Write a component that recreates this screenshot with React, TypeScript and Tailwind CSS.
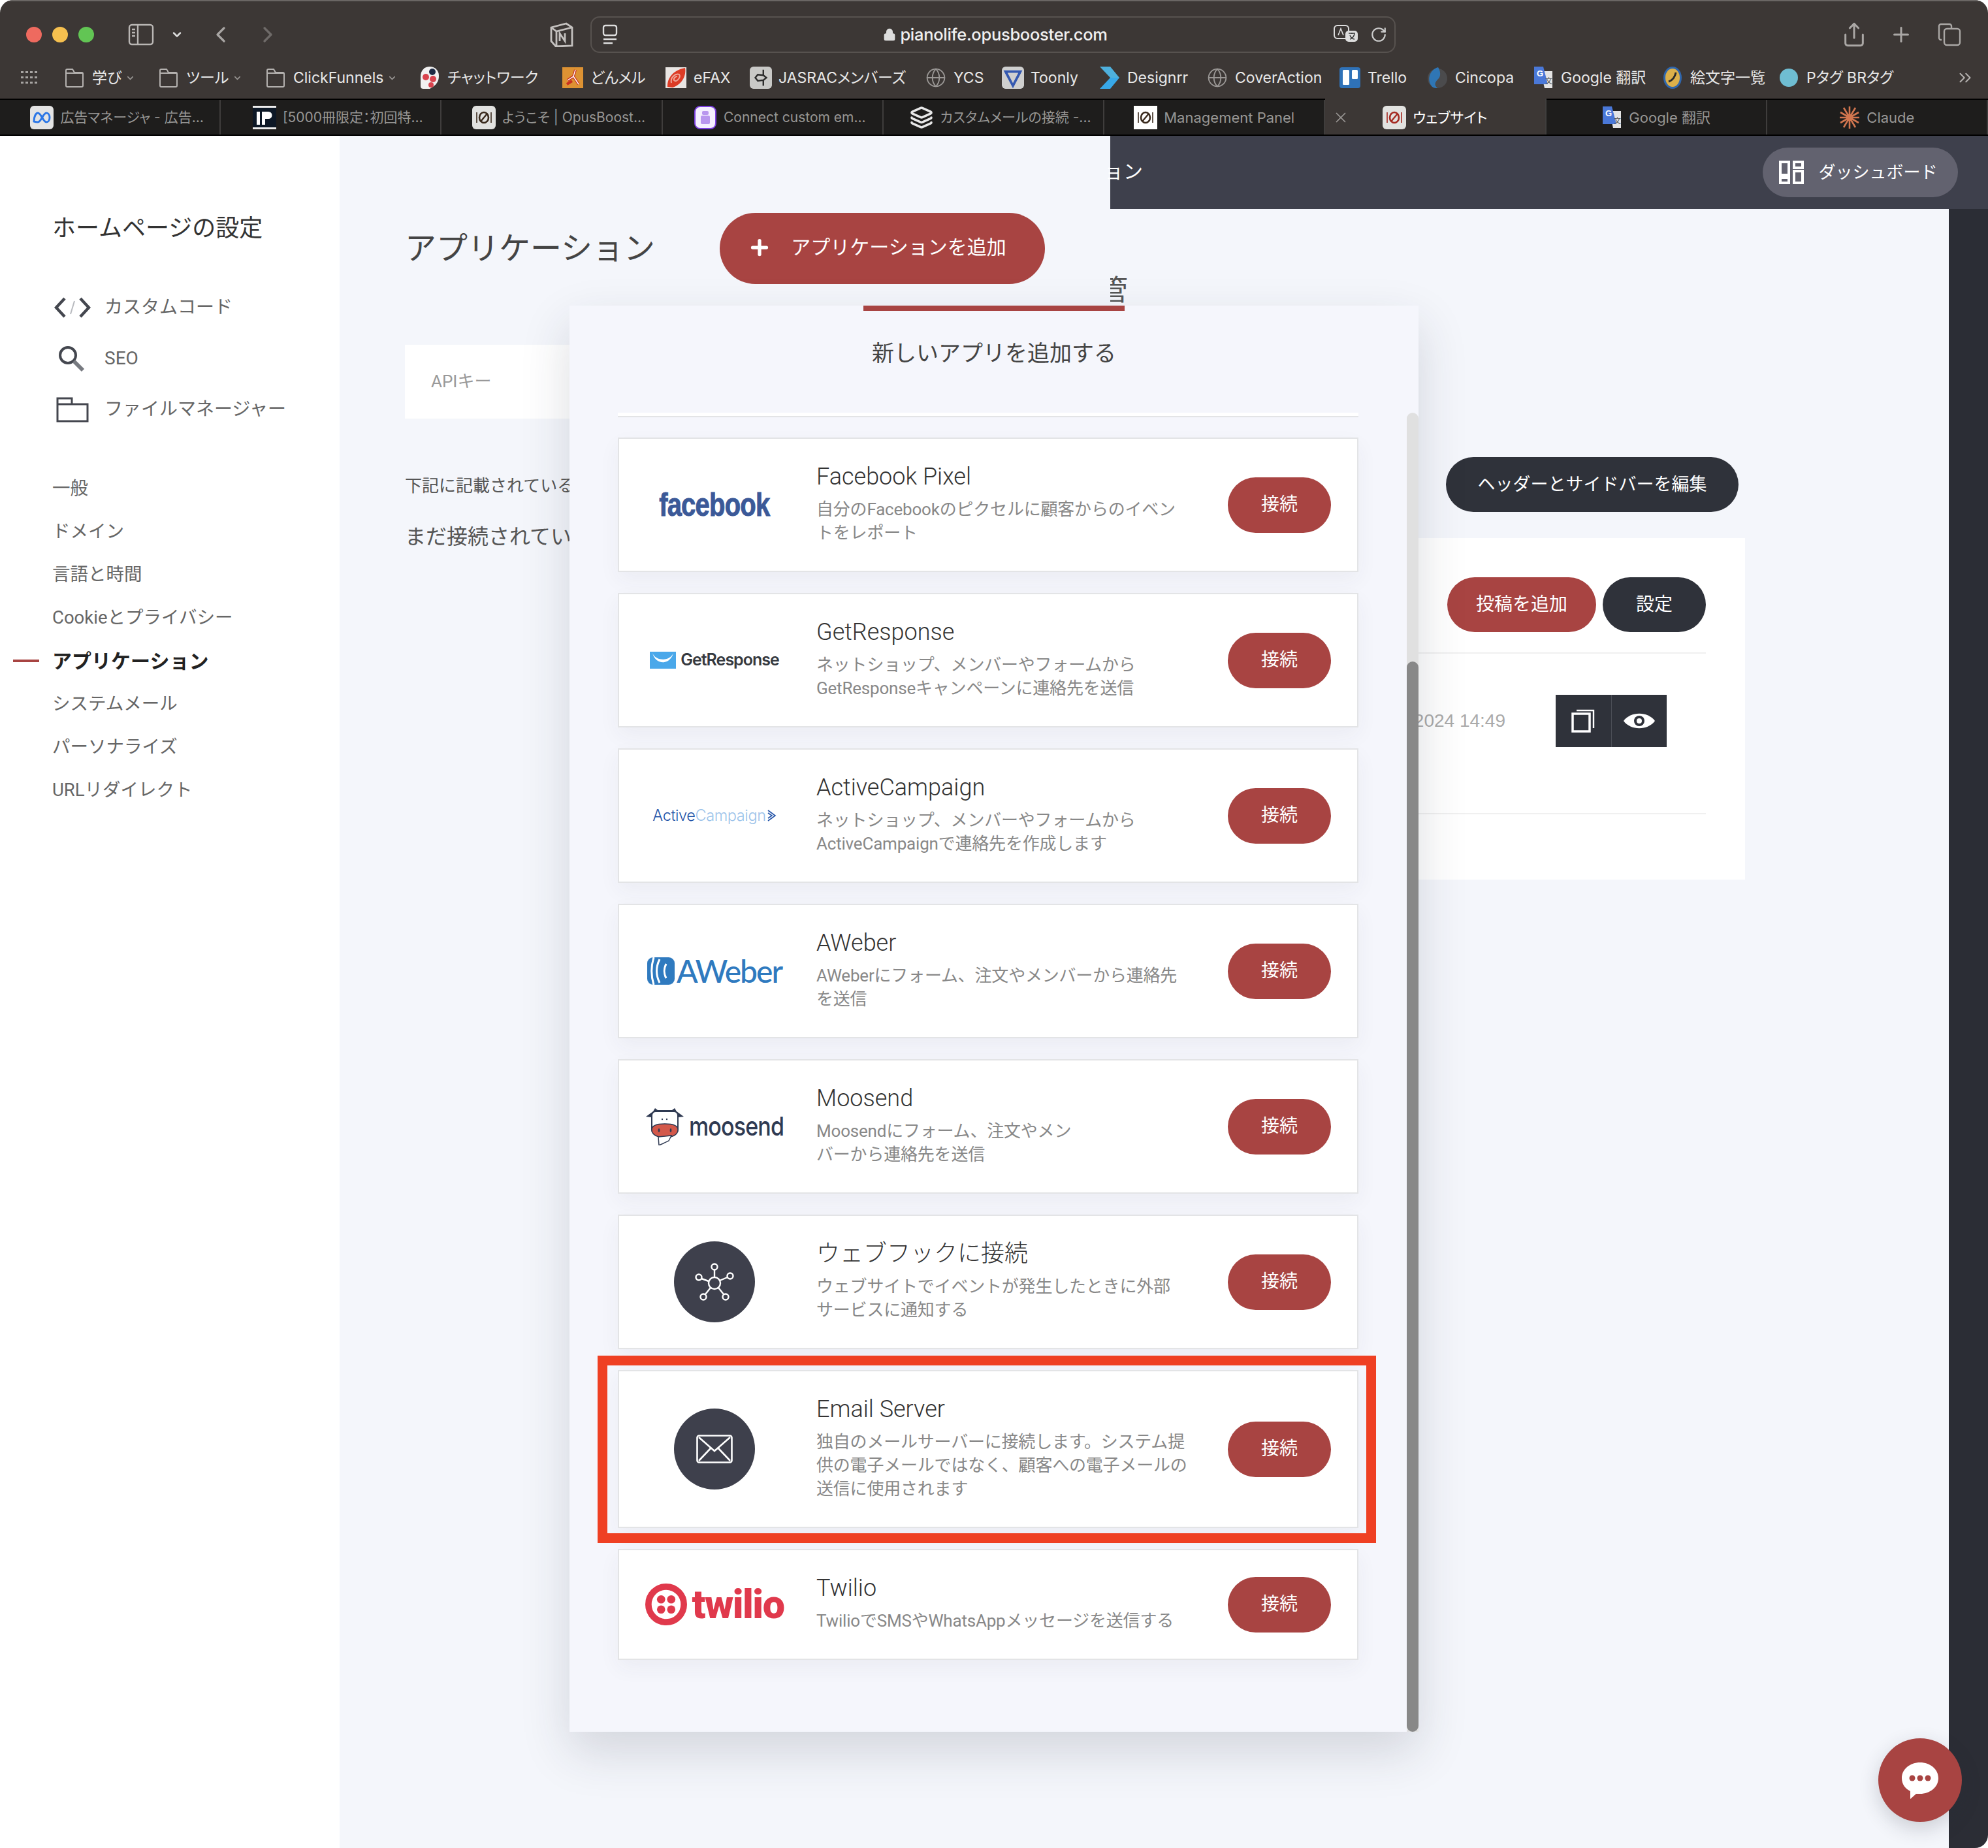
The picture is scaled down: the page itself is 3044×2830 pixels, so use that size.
import type { ReactNode } from 'react';
import { ChevronDown, ChevronLeft, ChevronRight, ChevronsRight, Globe, Layers, Lock, Plus, RotateCw, Share, X } from 'lucide-react';

const Folder = () => (
    <svg width="30" height="32" viewBox="0 0 30 32" fill="none" stroke="#b5b2b0" strokeWidth="2">
        <path d="M2 28V5a2 2 0 0 1 2-2h8l3 5h11a2 2 0 0 1 2 2v18a2 2 0 0 1-2 2H4a2 2 0 0 1-2-2zM2 9h26" />
    </svg>
);

const Chatwork = () => (
    <svg width="32" height="36" viewBox="0 0 32 36">
        <path d="M2 16C2 7 8 1 16 1s14 6 14 14-3 14-14 20H6c-2 0-4-1-4-4z" fill="#f1f1f1" />
        <circle cx="20" cy="9" r="5" fill="#1d2a44" />
        <circle cx="10" cy="17" r="5" fill="#d9434e" />
        <circle cx="21" cy="20" r="5" fill="#d9434e" />
        <circle cx="18" cy="29" r="4" fill="#d9434e" />
    </svg>
);

const Donmail = () => (
    <svg width="32" height="32" viewBox="0 0 32 32">
        <rect width="32" height="32" fill="#dd9233" />
        <path d="M20 4l-3 10-9 6m9-6l8 12M7 26l8-5" stroke="#c8301f" strokeWidth="4" fill="none" />
        <path d="M20 4l-3 10-9 6m9-6l8 12" stroke="#fff" strokeWidth="1.4" fill="none" />
    </svg>
);

const Efax = () => (
    <svg width="32" height="32" viewBox="0 0 32 32">
        <rect width="32" height="32" fill="#e9e5e3" />
        <path d="M30 1C12 4 2 17 3 30l8 1C26 26 32 12 30 1z" fill="#dd3c26" />
        <path d="M9 24c-2-8 6-15 12-13 3 5-5 13-8 9-1-4 3-6 5-6" stroke="#f0a79a" strokeWidth="2" fill="none" />
    </svg>
);

const Jasrac = () => (
    <svg width="36" height="36" viewBox="0 0 36 36">
        <rect width="36" height="36" rx="6" fill="#c9c9c7" />
        <path d="M22 5v9l5 4-5 4v9M22 14l-9-1-4 5 4 5 9-1" stroke="#2a2a2a" strokeWidth="2.5" fill="none" />
    </svg>
);

const Toonly = () => (
    <svg width="36" height="36" viewBox="0 0 36 36">
        <rect width="36" height="36" rx="6" fill="#cfcfcf" />
        <path d="M6 8h24L18 31z" fill="none" stroke="#3458b0" strokeWidth="4" />
    </svg>
);

const Designrr = () => (
    <svg width="32" height="36" viewBox="0 0 32 36">
        <path d="M1 1h16l14 17H17z" fill="#4eb0dd" />
        <path d="M31 18L17 35H1l16-17z" fill="#38a8e8" />
    </svg>
);

const Trello = () => (
    <svg width="32" height="32" viewBox="0 0 32 32">
        <rect width="32" height="32" rx="4" fill="#2f72b8" />
        <rect x="5" y="4" width="10" height="23" rx="1.5" fill="#fff" />
        <rect x="19" y="4" width="9" height="14" rx="1.5" fill="#fff" />
    </svg>
);

const Cincopa = () => (
    <svg width="32" height="34" viewBox="0 0 32 34">
        <circle cx="16" cy="18" r="15" fill="#4b4b4d" />
        <path d="M17 1C5 4-2 20 8 31c3 2 6 2 8 2-7-6-2-11 2-15 3-4 3-11-1-17z" fill="#2f76b5" />
    </svg>
);

const GTranslate = () => (
    <svg width="32" height="36" viewBox="0 0 32 36">
        <path d="M12 8h18v26H18z" fill="#e4e4e4" />
        <path d="M2 1h14l7 27H2z" fill="#4a78d8" />
        <text x="6" y="16" fontSize="13" fontWeight="700" fill="#fff" fontFamily="Liberation Sans">G</text>
        <text x="19" y="27" fontSize="11" fill="#555" fontFamily="Noto Sans CJK JP">文</text>
    </svg>
);

const Emoji = () => (
    <svg width="30" height="36" viewBox="0 0 30 36">
        <ellipse cx="15" cy="18" rx="14" ry="17" fill="#2f66ad" />
        <ellipse cx="15" cy="18" rx="11" ry="14" fill="#dcb04a" />
        <path d="M9 24c6-2 10-8 11-14" stroke="#2a2a2a" strokeWidth="3" fill="none" />
    </svg>
);

const Ptag = () => (
    <svg width="32" height="32" viewBox="0 0 32 32">
        <circle cx="16" cy="16" r="14" fill="#6fbdd2" />
    </svg>
);

const Meta = () => (
    <svg width="36" height="36" viewBox="0 0 36 36">
        <rect width="36" height="36" rx="6" fill="#e4e4e4" />
        <path d="M6 24c0-8 3-13 6-13 5 0 8 14 13 14 3 0 5-3 5-7 0-4-2-7-5-7-5 0-8 14-13 14-3 0-6-1-6-1z" fill="none" stroke="#2b76e6" strokeWidth="3" />
    </svg>
);

const Book = () => (
    <svg width="36" height="36" viewBox="0 0 36 36">
        <rect width="36" height="36" rx="3" fill="#0d1826" />
        <rect y="0" width="36" height="3" fill="#eee" />
        <rect y="33" width="36" height="3" fill="#eee" />
        <rect x="6" y="9" width="5" height="20" fill="#fff" />
        <path d="M14 9h10a5 5 0 0 1 0 11h-5v9h-5z" fill="#fff" />
    </svg>
);

const Opus = ({ bg = '#e2e2e0', mark = '#3a2a1d', rounded = true }: { bg?: string; mark?: string; rounded?: boolean }) => (
    <svg width="36" height="36" viewBox="0 0 36 36">
        <rect width="36" height="36" rx={rounded ? 6 : 0} fill={bg} />
        <path d="M7 10v16M29 10v16" stroke={mark} strokeWidth="1.6" />
        <ellipse cx="18" cy="18" rx="7" ry="8" fill="none" stroke={mark} strokeWidth="2.6" />
        <path d="M13 24L23 12" stroke={mark} strokeWidth="2.4" />
    </svg>
);

const Connect = () => (
    <svg width="36" height="36" viewBox="0 0 36 36">
        <rect x="2" y="1" width="32" height="34" rx="8" fill="#f5efff" stroke="#7c3fe0" strokeWidth="2" />
        <rect x="11" y="15" width="14" height="13" rx="2" fill="#b996ee" />
        <rect x="13" y="8" width="10" height="6" rx="2" fill="#b996ee" />
    </svg>
);

const Claude = () => (
    <svg width="32" height="36" viewBox="0 0 32 36" stroke="#d2764f" strokeWidth="2.6">
        <path d="M16 1v34M2 10l28 16M30 10L2 26M7 3l18 30M25 3L7 33M1 18h30" />
    </svg>
);

const marks: { icon: ReactNode; label: string; w: string; arrow?: boolean }[] = [
    { icon: <Folder />, label: '学び', w: 'w-[144px]', arrow: true },
    { icon: <Folder />, label: 'ツール', w: 'w-[164px]', arrow: true },
    { icon: <Folder />, label: 'ClickFunnels', w: 'w-[236px]', arrow: true },
    { icon: <Chatwork />, label: 'チャットワーク', w: 'w-[219px]' },
    { icon: <Donmail />, label: 'どんメル', w: 'w-[158px]' },
    { icon: <Efax />, label: 'eFAX', w: 'w-[130px]' },
    { icon: <Jasrac />, label: 'JASRACメンバーズ', w: 'w-[268px]' },
    { icon: <Globe size={32} color="#9a9795" strokeWidth={1.4} />, label: 'YCS', w: 'w-[118px]' },
    { icon: <Toonly />, label: 'Toonly', w: 'w-[148px]' },
    { icon: <Designrr />, label: 'Designrr', w: 'w-[165px]' },
    { icon: <Globe size={32} color="#9a9795" strokeWidth={1.4} />, label: 'CoverAction', w: 'w-[203px]' },
    { icon: <Trello />, label: 'Trello', w: 'w-[134px]' },
    { icon: <Cincopa />, label: 'Cincopa', w: 'w-[162px]' },
    { icon: <GTranslate />, label: 'Google 翻訳', w: 'w-[198px]' },
    { icon: <Emoji />, label: '絵文字一覧', w: 'w-[178px]' },
    { icon: <Ptag />, label: 'Pタグ BRタグ', w: 'w-[272px]' },
];

const tabs: { icon: ReactNode; label: string; active?: boolean; shifted?: boolean }[] = [
    { icon: <Meta />, label: '広告マネージャ - 広告…', shifted: true },
    { icon: <Book />, label: '[5000冊限定：初回特…', shifted: true },
    { icon: <Opus />, label: 'ようこそ | OpusBoost...', shifted: true },
    { icon: <Connect />, label: 'Connect custom em...', shifted: true },
    { icon: <Layers size={36} color="#e8e8e8" strokeWidth={2.4} />, label: 'カスタムメールの接続 -...', shifted: true },
    { icon: <Opus bg="#ffffff" rounded={false} />, label: 'Management Panel' },
    { icon: <Opus mark="#a52a22" />, label: 'ウェブサイト', active: true },
    { icon: <GTranslate />, label: 'Google 翻訳' },
    { icon: <Claude />, label: 'Claude' },
];

const Facebook = () => (
    <span className="scale-x-[0.8] font-['Liberation_Sans'] text-[50px] font-bold tracking-[-1px] text-[#3b5998] [-webkit-text-stroke:1px_#3b5998]">facebook</span>
);

const GetResponse = () => (
    <div className="flex items-center gap-[7px]">
        <svg width="40" height="26" viewBox="0 0 40 26">
            <rect width="40" height="26" fill="#4aa8ea" />
            <path d="M4 2c5 13 27 13 32 0-5 19-27 19-32 0z" fill="#fff" />
        </svg>
        <span className="font-['Inter'] text-[25px] font-semibold tracking-[-1px] text-[#35393f]">GetResponse</span>
    </div>
);

const ActiveCampaign = () => (
    <div className="flex items-center font-['Inter'] text-[23.5px] font-light tracking-[-0.4px]">
        <span className="text-[#2353a8]">Active</span>
        <span className="font-light text-[#9cc3ea]">Campaign</span>
        <svg width="14" height="20" viewBox="0 0 14 20" fill="none" stroke="#2353a8" strokeWidth="1.6" className="ml-[2px]">
            <path d="M1 2l11 8-11 8M1 6l6 4-6 4" />
        </svg>
    </div>
);

const AWeber = () => (
    <div className="flex items-center gap-[3px]">
        <svg width="42" height="42" viewBox="0 0 42 42">
            <rect width="42" height="42" rx="9" fill="#2f7abf" />
            <path d="M10 0c-4 13-4 29 0 42M19 3c-6 12-6 24 0 36M29 10c-4 8-4 14 0 22" fill="none" stroke="#fff" strokeWidth="3" />
        </svg>
        <span className="font-['Lato'] text-[48px] leading-[50px] font-medium tracking-[-2px] text-[#2f7abf]">AWeber</span>
    </div>
);

const Moosend = () => (
    <div className="flex items-center gap-[7px]">
        <svg width="60" height="58" viewBox="0 0 60 58">
            <path d="M1 14L12 6l3-5 4 3h22l4-3 3 5 11 8-9 1v-5H10v5z" fill="#2f3a52" />
            <rect x="10" y="6" width="40" height="34" rx="6" fill="#fff" stroke="#2f3a52" strokeWidth="2" />
            <path d="M10 34c0-7 9-9 20-9s20 2 20 9c0 8-9 12-20 12S10 42 10 34z" fill="#d3584a" stroke="#2f3a52" strokeWidth="1.5" />
            <path d="M20 45l20-2-4 8-15 7z" fill="#fff" stroke="#2f3a52" strokeWidth="1.5" />
            <circle cx="26" cy="18" r="1.2" fill="#2f3a52" />
            <circle cx="33" cy="18" r="1.2" fill="#2f3a52" />
            <ellipse cx="21" cy="35" rx="1.4" ry="3" fill="#2f3a52" />
            <ellipse cx="39" cy="35" rx="1.4" ry="3" fill="#2f3a52" />
        </svg>
        <span className="-mr-[25px] origin-left scale-x-[0.85] font-['Inter'] text-[40px] font-medium tracking-[-1px] text-[#2f3a52]">moosend</span>
    </div>
);

const Round = ({ children }: { children: ReactNode }) => (
    <div className="flex h-[124px] w-[124px] items-center justify-center rounded-full bg-[#3e404c]">{children}</div>
);

const Webhook = () => (
    <Round>
        <svg width="62" height="62" viewBox="0 0 62 62" fill="none" stroke="#fff" strokeWidth="2.4">
            <circle cx="31" cy="33" r="9" />
            <circle cx="31" cy="8" r="4.5" />
            <circle cx="7" cy="24" r="4.5" />
            <circle cx="55" cy="22" r="4.5" />
            <circle cx="14" cy="54" r="4.5" />
            <circle cx="48" cy="54" r="4.5" />
            <path d="M31 13v11M11 26l11 4M51 24l-12 5M17 50l8-10M45 50l-8-10" />
        </svg>
    </Round>
);

const Mail = () => (
    <Round>
        <svg width="56" height="44" viewBox="0 0 56 44" fill="none" stroke="#fff" strokeWidth="2.6">
            <rect x="1.5" y="1.5" width="53" height="41" rx="3" />
            <path d="M4 4l24 21L52 4M4 40l18-19M52 40L34 21" />
        </svg>
    </Round>
);

const Twilio = () => (
    <div className="flex items-center gap-[8px]">
        <svg width="64" height="64" viewBox="0 0 66 66">
            <circle cx="33" cy="33" r="28" fill="none" stroke="#e0394c" strokeWidth="10" />
            <circle cx="25" cy="25" r="6.5" fill="#e0394c" />
            <circle cx="41" cy="25" r="6.5" fill="#e0394c" />
            <circle cx="25" cy="41" r="6.5" fill="#e0394c" />
            <circle cx="41" cy="41" r="6.5" fill="#e0394c" />
        </svg>
        <span className="font-['Roboto'] text-[61px] leading-[60px] font-black tracking-[-1.5px] text-[#e0394c]">twilio</span>
    </div>
);

const apps: { logo: ReactNode; title: string; desc: string; framed?: boolean }[] = [
    { logo: <Facebook />, title: 'Facebook Pixel', desc: '自分のFacebookのピクセルに顧客からのイベン\nトをレポート' },
    { logo: <GetResponse />, title: 'GetResponse', desc: 'ネットショップ、メンバーやフォームから\nGetResponseキャンペーンに連絡先を送信' },
    { logo: <ActiveCampaign />, title: 'ActiveCampaign', desc: 'ネットショップ、メンバーやフォームから\nActiveCampaignで連絡先を作成します' },
    { logo: <AWeber />, title: 'AWeber', desc: 'AWeberにフォーム、注文やメンバーから連絡先\nを送信' },
    { logo: <Moosend />, title: 'Moosend', desc: 'Moosendにフォーム、注文やメン\nバーから連絡先を送信' },
    { logo: <Webhook />, title: 'ウェブフックに接続', desc: 'ウェブサイトでイベントが発生したときに外部\nサービスに通知する' },
    { logo: <Mail />, title: 'Email Server', desc: '独自のメールサーバーに接続します。システム提\n供の電子メールではなく、顧客への電子メールの\n送信に使用されます', framed: true },
    { logo: <Twilio />, title: 'Twilio', desc: 'TwilioでSMSやWhatsAppメッセージを送信する' },
];

const sideTools: { icon: ReactNode; label: string }[] = [
    {
        icon: (
            <svg width="56" height="34" viewBox="0 0 56 34" fill="none" stroke="#44474f" strokeWidth="4.5" className="ml-[3px]">
                <path d="M16 3L3 17l13 14M40 3l13 14-13 14" />
                <path d="M31 7l-6 20" stroke="#b9bbc0" strokeWidth="2" />
            </svg>
        ),
        label: 'カスタムコード',
    },
    {
        icon: (
            <svg width="42" height="42" viewBox="0 0 42 42" fill="none" stroke="#44474f" strokeWidth="4" className="ml-[8px]">
                <circle cx="16" cy="16" r="12" />
                <path d="M25 25l14 14" stroke="#777a80" strokeWidth="6" />
            </svg>
        ),
        label: 'SEO',
    },
    {
        icon: (
            <svg width="50" height="40" viewBox="0 0 50 40" fill="none" stroke="#44474f" strokeWidth="3" className="ml-[6px]">
                <path d="M2 12h46v26H2zM2 12V3h22v9" />
            </svg>
        ),
        label: 'ファイルマネージャー',
    },
];

const sideLinks = ['一般', 'ドメイン', '言語と時間', 'Cookieとプライバシー', 'アプリケーション', 'システムメール', 'パーソナライズ', 'URLリダイレクト'];

const Pill = ({ className, children }: { className: string; children: ReactNode }) => (
    <button type="button" className={`flex items-center justify-center rounded-full text-white ${className}`}>
        {children}
    </button>
);

function BrowserChrome() {
    return (
        <div className="font-['Inter','Noto_Sans_CJK_JP',sans-serif] [font-feature-settings:'palt']">
            <div className="h-[151px] border-t-2 border-[#6a6664] bg-[#3c3735]">
                <div className="flex h-[101px] items-center">
                    <div className="ml-[40px] flex gap-[16px]">
                        <span className="h-[24px] w-[24px] rounded-full bg-[#ee6a5f]" />
                        <span className="h-[24px] w-[24px] rounded-full bg-[#f6c04f]" />
                        <span className="h-[24px] w-[24px] rounded-full bg-[#62c554]" />
                    </div>
                    <svg width="40" height="34" viewBox="0 0 40 34" fill="none" stroke="#b9b6b4" strokeWidth="2.4" className="ml-[52px]">
                        <rect x="2" y="2" width="36" height="30" rx="4" />
                        <path d="M15 2v30M6 9h5M6 14h5M6 19h5" />
                    </svg>
                    <ChevronDown size={20} color="#ddd" strokeWidth={3} className="ml-[25px]" />
                    <ChevronLeft size={40} color="#a8a5a3" strokeWidth={2} className="ml-[37px]" />
                    <ChevronRight size={40} color="#6f6b69" strokeWidth={2} className="ml-[32px]" />
                    <svg width="38" height="38" viewBox="0 0 38 38" fill="none" stroke="#c4c1bf" strokeWidth="2.8" className="ml-[411px]">
                        <path d="M3 8l23-6 9 6v28l-25 1-7-8zM3 8l8 6 24-6M11 14v22" />
                        <path d="M16 29V17l8 12V17" />
                    </svg>
                    <div className="ml-[25px] flex h-[56px] w-[1233px] items-center rounded-[14px] border-2 border-[#57524f]">
                        <svg width="24" height="32" viewBox="0 0 24 32" fill="none" stroke="#ddd" strokeWidth="2.4" className="ml-[16px]">
                            <rect x="2" y="2" width="20" height="15" rx="3" />
                            <path d="M2 23h20M2 29h14" />
                        </svg>
                        <div className="flex flex-1 items-center justify-center gap-[6px] pl-[60px]">
                            <Lock size={20} color="#ddd" fill="#ddd" />
                            <span className="text-[25.5px] leading-none font-medium tracking-[-0.3px] text-[#f0f0f0]">pianolife.opusbooster.com</span>
                        </div>
                        <svg width="38" height="30" viewBox="0 0 38 30" className="mr-[18px]">
                            <rect x="1" y="1" width="22" height="20" rx="5" fill="none" stroke="#ddd" strokeWidth="2" />
                            <rect x="18" y="9" width="19" height="17" rx="5" fill="#ddd" />
                            <path d="M23 13h10M28 12v2M32 14c-1 4-4 7-7 8M25 16c1 3 4 6 7 6" stroke="#333" strokeWidth="1.4" fill="none" />
                            <path d="M7 16l4-10 4 10" stroke="#ddd" strokeWidth="1.6" fill="none" />
                        </svg>
                        <RotateCw size={26} color="#ccc" strokeWidth={2} className="mr-[11px]" />
                    </div>
                    <Share size={40} color="#aaa7a5" strokeWidth={1.8} className="ml-[682px]" />
                    <Plus size={36} color="#aaa7a5" strokeWidth={2} className="ml-[34px]" />
                    <svg width="36" height="36" viewBox="0 0 36 36" fill="none" stroke="#aaa7a5" strokeWidth="2.4" className="ml-[38px]">
                        <rect x="10" y="9" width="24" height="25" rx="4" />
                        <path d="M6 26H5a3 3 0 0 1-3-3V5a3 3 0 0 1 3-3h13a3 3 0 0 1 3 3v3" />
                    </svg>
                </div>
                <div className="-mt-[8px] flex h-[48px] items-center text-[23px] leading-none text-[#e8e8e8]">
                    <svg width="26" height="24" viewBox="0 0 26 24" fill="#a8a5a3" className="mr-[39px] ml-[32px]">
                        <path d="M0 2h4v3H0zM7 2h4v3H7zM14 2h4v3h-4zM21 2h4v3h-4zM0 10h4v3H0zM7 10h4v3H7zM14 10h4v3h-4zM21 10h4v3h-4zM0 18h4v3H0zM7 18h4v3H7zM14 18h4v3h-4zM21 18h4v3h-4z" />
                    </svg>
                    {marks.map((m) => (
                        <div key={m.label} className={`flex shrink-0 items-center gap-[10px] ${m.w}`}>
                            <span className="flex w-[34px] shrink-0 justify-center">{m.icon}</span>
                            <span className="whitespace-nowrap">{m.label}</span>
                            {m.arrow && <ChevronDown size={15} color="#9a9795" strokeWidth={2.5} className="-ml-[4px]" />}
                        </div>
                    ))}
                    <ChevronsRight size={30} color="#b5b2b0" strokeWidth={1.6} />
                </div>
            </div>
            <div className="grid h-[57px] grid-cols-9 border-y-2 border-black bg-[#1e1d1c] leading-none">
                {tabs.map((t) => (
                    <div
                        key={t.label}
                        className={`relative flex items-center justify-center gap-[10px] border-r-2 border-[#3f3d3c] ${t.shifted ? 'pl-[22px] text-[21px]' : 'text-[22px]'} ${t.active ? '-mt-[2px] bg-[#3c3735] pt-[2px] text-white' : 'text-[#979694]'}`}
                    >
                        {t.active && <X size={26} color="#9a9795" strokeWidth={1.6} className="absolute left-[11px]" />}
                        <span className="shrink-0">{t.icon}</span>
                        <span className="whitespace-nowrap">{t.label}</span>
                    </div>
                ))}
            </div>
        </div>
    );
}

function Sidebar() {
    return (
        <aside className="w-[520px] shrink-0 bg-white pt-[117px] pl-[80px]">
            <h2 className="text-[36px] leading-[50px] font-normal text-[#333]">ホームページの設定</h2>
            <div className="mt-[57px]">
                {sideTools.map((s) => (
                    <div key={s.label} className="flex h-[78px] items-center">
                        <span className="flex w-[80px] shrink-0">{s.icon}</span>
                        <span className="text-[28px] text-[#666]">{s.label}</span>
                    </div>
                ))}
            </div>
            <nav className="mt-[49px]">
                {sideLinks.map((l) => {
                    const active = l === 'アプリケーション';
                    return (
                        <div key={l} className={`relative flex h-[66px] items-center ${active ? 'text-[30px] font-bold text-[#222]' : 'text-[27.5px] text-[#666]'}`}>
                            {active && <span className="absolute -left-[60px] h-[4px] w-[40px] bg-[#a84442]" />}
                            {l}
                        </div>
                    );
                })}
            </nav>
        </aside>
    );
}

function AppsPanel() {
    return (
        <section className="w-[1180px] shrink-0 bg-[#f4f6fb] pt-[118px] pl-[100px]">
            <div className="flex h-[109px] items-center">
                <h1 className="w-[482px] shrink-0 text-[48px] font-normal text-[#444]">アプリケーション</h1>
                <Pill className="h-[109px] w-[498px] gap-[30px] bg-[#a84442] pr-[16px] pb-[4px] text-[30px]">
                    <Plus size={36} strokeWidth={3.5} />
                    アプリケーションを追加
                </Pill>
            </div>
            <div className="mt-[93px] flex h-[113px] w-[1060px] items-center bg-white pl-[40px] text-[26px] text-[#999]">APIキー</div>
            <p className="mt-[85px] text-[26px] leading-[36px] text-[#555]">下記に記載されているアプリケーション</p>
            <p className="mt-[38px] text-[32px] leading-[44px] text-[#555]">まだ接続されていません</p>
        </section>
    );
}

function PageBehind() {
    return (
        <div className="flex min-w-0 flex-1 flex-col">
            <header className="flex h-[112px] shrink-0 items-center justify-between bg-[#3e404c]">
                <span className="-mt-[4px] -ml-[10px] text-[30px] text-white">ョン</span>
                <Pill className="mr-[46px] h-[76px] w-[299px] gap-[22px] bg-[#62626f] pr-[6px] text-[26px]">
                    <svg width="38" height="36" viewBox="0 0 38 36" fill="none" stroke="#fff" strokeWidth="4">
                        <rect x="2" y="2" width="13" height="20" />
                        <rect x="23" y="2" width="13" height="9" />
                        <rect x="23" y="16" width="13" height="18" />
                        <rect x="2" y="26" width="13" height="8" />
                    </svg>
                    ダッシュボード
                </Pill>
            </header>
            <div className="flex flex-1">
                <div className="min-w-0 flex-1 overflow-hidden bg-[#f4f6fb]">
                    <div className="mt-[97px] -ml-[17px] text-[44px] leading-[56px] text-[#555]">管</div>
                    <Pill className="mt-[227px] ml-[514px] h-[84px] w-[448px] bg-[#2f323a] text-[27px]">ヘッダーとサイドバーを編集</Pill>
                    <div className="mt-[40px] ml-[60px] h-[523px] w-[912px] bg-white pt-[60px]">
                        <div className="flex justify-end gap-[10px] pr-[60px]">
                            <Pill className="h-[84px] w-[228px] bg-[#a84442] text-[28px]">投稿を追加</Pill>
                            <Pill className="h-[84px] w-[158px] bg-[#2f323a] text-[28px]">設定</Pill>
                        </div>
                        <div className="mt-[31px] mr-[60px] flex h-[248px] items-start justify-end border-y-2 border-[#f0f0f0] pt-[63px] pr-[60px]">
                            <span className="mt-[21px] mr-[77px] font-['Liberation_Sans'] text-[28px] leading-[38px] text-[#aaa]">2024 14:49</span>
                            <div className="flex h-[80px] w-[170px] bg-[#2f323a]">
                                <div className="flex flex-1 items-center justify-center border-r border-[#4a4d55]">
                                    <svg width="36" height="36" viewBox="0 0 36 36" fill="none" stroke="#fff" strokeWidth="3.5">
                                        <rect x="2" y="7" width="26" height="27" />
                                        <path d="M8 2h26v27" strokeWidth="2.4" />
                                    </svg>
                                </div>
                                <div className="flex flex-1 items-center justify-center">
                                    <svg width="50" height="30" viewBox="0 0 50 30">
                                        <path d="M1 15C12 0 38 0 49 15 38 30 12 30 1 15z" fill="#fff" />
                                        <circle cx="25" cy="15" r="8" fill="#2f323a" />
                                        <circle cx="25" cy="15" r="4" fill="#fff" />
                                    </svg>
                                </div>
                            </div>
                        </div>
                    </div>
                </div>
                <div className="w-[60px] shrink-0 bg-[#2b2d35]" />
            </div>
        </div>
    );
}

function AppCard({ logo, title, desc, framed }: { logo: ReactNode; title: string; desc: string; framed?: boolean }) {
    return (
        <div className="relative flex w-[1134px] items-stretch border-2 border-[#e3e4e6] bg-white shadow-[0_12px_30px_rgba(60,64,80,0.05)]">
            <div className="flex w-[292px] shrink-0 items-center justify-center">{logo}</div>
            <div className="ml-[10px] flex-1 pt-[36px] pb-[40px]">
                <h3 className="text-[36px] leading-[44px] font-light text-[#333]">{title}</h3>
                <p className="mt-[10px] text-[26px] leading-[36px] tracking-[-0.2px] whitespace-pre-line text-[#888]">{desc}</p>
            </div>
            <div className="flex items-center pr-[40px]">
                <Pill className="h-[85px] w-[158px] bg-[#a84442] text-[28px]">接続</Pill>
            </div>
            {framed && <div className="absolute -top-[24px] -right-[29px] -bottom-[25px] -left-[33px] border-[15px] border-[#ef4023]" />}
        </div>
    );
}

function AddAppModal() {
    return (
        <div className="absolute top-[260px] left-[872px] flex h-[2184px] w-[1300px] flex-col bg-[#f5f6fc] shadow-[0_30px_70px_rgba(40,44,60,0.16)]">
            <span className="absolute top-0 left-[450px] h-[8px] w-[400px] bg-[#a84442]" />
            <div className="flex h-[164px] shrink-0 justify-center pt-[49px]">
                <h2 className="text-[34px] leading-[48px] font-normal text-[#444]">新しいアプリを追加する</h2>
            </div>
            <div className="flex min-h-0 flex-1">
                <div className="flex-1 pl-[74px]">
                    <div className="h-[7px] w-[1134px] border-b-2 border-[#e3e4e6] bg-white" />
                    <div className="mt-[31px] flex flex-col gap-[32px]">
                        {apps.map((a) => (
                            <AppCard key={a.title} {...a} />
                        ))}
                    </div>
                </div>
                <div className="flex w-[18px] shrink-0 flex-col rounded-t-full bg-[#e0e0e0] pt-[381px]">
                    <div className="flex-1 rounded-full bg-[#888]" />
                </div>
            </div>
        </div>
    );
}

export default function App() {
    return (
        <div className="flex h-[2830px] w-[3044px] flex-col overflow-hidden rounded-[20px] bg-white font-[Roboto,'Noto_Sans_CJK_JP',sans-serif]">
            <BrowserChrome />
            <main className="relative flex min-h-0 flex-1">
                <Sidebar />
                <AppsPanel />
                <PageBehind />
                <AddAppModal />
                <button
                    type="button"
                    className="absolute right-[40px] bottom-[40px] flex h-[128px] w-[128px] items-center justify-center rounded-full bg-[#a84442] shadow-[0_10px_30px_rgba(40,44,60,0.2)]"
                >
                    <svg width="58" height="58" viewBox="0 0 58 58">
                        <path d="M29 2c15 0 28 10 28 24S44 50 29 50h-6l-9 8v-12C6 42 1 35 1 26 1 12 14 2 29 2z" fill="#fff" />
                        <circle cx="17" cy="26" r="4.5" fill="#a84442" />
                        <circle cx="29" cy="26" r="4.5" fill="#a84442" />
                        <circle cx="41" cy="26" r="4.5" fill="#a84442" />
                    </svg>
                </button>
            </main>
        </div>
    );
}
